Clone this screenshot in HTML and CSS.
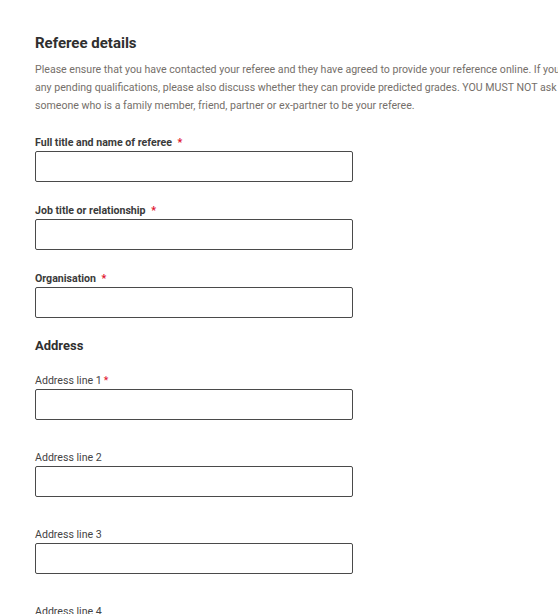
FILE: index.html
```html
<!DOCTYPE html>
<html lang="en">
<head>
<meta charset="utf-8">
<title>Referee details</title>
<link rel="stylesheet" href="styles.css">
</head>
<body>
<main class="page">
  <section class="form">
    <h2 class="title">Referee details</h2>
    <p class="intro">Please ensure that you have contacted your referee and they have agreed to provide your reference online. If you have any pending qualifications, please also discuss whether they can provide predicted grades. YOU MUST NOT ask someone who is a family member, friend, partner or ex-partner to be your referee.</p>

    <div class="field req">
      <label class="label strong" for="f1">Full title and name of referee <span class="star">*</span></label>
      <input class="input" id="f1" type="text">
    </div>
    <div class="field req">
      <label class="label strong" for="f2">Job title or relationship <span class="star">*</span></label>
      <input class="input" id="f2" type="text">
    </div>
    <div class="field req">
      <label class="label strong" for="f3">Organisation <span class="star">*</span></label>
      <input class="input" id="f3" type="text">
    </div>

    <h3 class="subtitle">Address</h3>

    <div class="field addr">
      <label class="label" for="a1">Address line 1<span class="star tight">*</span></label>
      <input class="input" id="a1" type="text">
    </div>
    <div class="field addr">
      <label class="label" for="a2">Address line 2</label>
      <input class="input" id="a2" type="text">
    </div>
    <div class="field addr">
      <label class="label" for="a3">Address line 3</label>
      <input class="input" id="a3" type="text">
    </div>
    <div class="field addr">
      <label class="label" for="a4">Address line 4</label>
      <input class="input" id="a4" type="text">
    </div>
  </section>
</main>
</body>
</html>
```
FILE: styles.css
```css
html, body {
  margin: 0;
  padding: 0;
  background: #ffffff;
  overflow: hidden;
}
body {
  font-family: Roboto, "Liberation Sans", Arial, sans-serif;
  color: #333333;
}
.page {
  padding: 33px 0 0 35px;
}
.form {
  display: flex;
  flex-direction: column;
  width: 558px;
}
.title {
  margin: 0;
  font-size: 15px;
  font-weight: 700;
  line-height: 20px;
  color: #2f2f2f;
}
.intro {
  margin: 8px 0 0 0;
  font-size: 10.6px;
  line-height: 18px;
  color: #756f6a;
}
.field {
  display: flex;
  flex-direction: column;
}
.field.req {
  margin-top: 21px;
}
.field.req + .field.req {
  margin-top: 22px;
}
.label {
  font-size: 10.6px;
  line-height: 14px;
  color: #444444;
  margin-bottom: 1px;
}
.label.strong {
  font-weight: 700;
  color: #3a3a3a;
}
.star {
  color: #e0112b;
  margin-left: 3px;
}
.star.tight {
  margin-left: 2px;
}
.input {
  box-sizing: border-box;
  width: 318px;
  height: 31px;
  margin: 0;
  border: 1px solid #4a4a4a;
  border-radius: 2px;
  background: #ffffff;
  padding: 0 8px;
  font: inherit;
}
.subtitle {
  margin: 19px 0 0 0;
  font-size: 13px;
  font-weight: 700;
  line-height: 18px;
  color: #2f2f2f;
}
.field.addr {
  margin-top: 19px;
}
.field.addr + .field.addr {
  margin-top: 31px;
}
```
